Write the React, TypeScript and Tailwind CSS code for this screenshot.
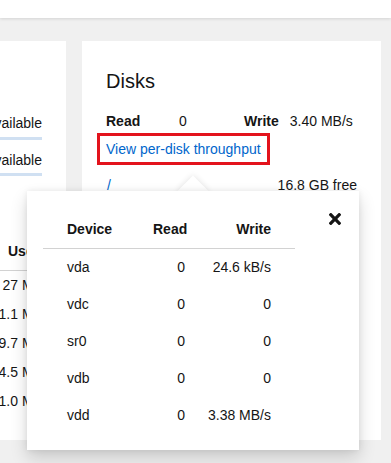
import React from "react";

export default function App() {
  const rows: [string, string, string][] = [
    ["vda", "0", "24.6 kB/s"],
    ["vdc", "0", "0"],
    ["sr0", "0", "0"],
    ["vdb", "0", "0"],
    ["vdd", "0", "3.38 MB/s"],
  ];
  const used = ["27", "1.1", "9.7", "4.5", "1.0"];
  return (
    <div className="relative h-[463px] w-[391px] overflow-hidden bg-[#f0f0f0] font-['Liberation_Sans',Arial,sans-serif] text-[14px] leading-[21px] text-[#151515]">
      <div className="relative z-10 h-[18px] bg-white shadow-[0_1px_3px_rgba(0,0,0,0.12)]" />
      <div className="flex gap-4 pt-[23px]">
        {/* left card (cut off) */}
        <div className="h-[399px] w-[66px] shrink-0 overflow-hidden bg-white pr-[24px]">
          <div className="mt-[72px] flex justify-end whitespace-nowrap">
            <span className="shrink-0">10.2 GB available</span>
          </div>
          <div className="mt-[3px] h-[3px] bg-[#d0e0f2]" />
          <div className="mt-[10px] flex justify-end whitespace-nowrap">
            <span className="shrink-0">5.5 GB available</span>
          </div>
          <div className="mt-[2px] h-[3px] bg-[#d0e0f2]" />
          <div className="mt-[65px] w-[60px] border-b border-[#d2d2d2] pb-[8px] pl-[8px] font-bold whitespace-nowrap">
            Used
          </div>
          {used.map((u) => (
            <div key={u} className="flex h-[29px] items-center whitespace-nowrap">
              <span className="ml-[-42px] w-[60px] shrink-0 text-right">{u}</span>
              <span className="ml-[4px] shrink-0">MiB</span>
            </div>
          ))}
        </div>
        {/* Disks card */}
        <div className="h-[399px] w-[299px] shrink-0 bg-white px-6 pt-[25px]">
          <h2 className="text-[20px] leading-[30px] font-normal">Disks</h2>
          <div className="mt-[15px] flex whitespace-nowrap">
            <span className="w-[73px] font-bold">Read</span>
            <span className="w-[65px]">0</span>
            <span className="font-bold">Write</span>
            <span className="ml-[11px]">3.40 MB/s</span>
          </div>
          <div className="mt-[1px] ml-[-9px] flex h-[32px] w-[173px] items-center border-[3px] border-[#e3131c] pl-[6px] whitespace-nowrap text-[#0066cc]">
            View per-disk throughput
          </div>
          <div className="mt-[10px] flex justify-between">
            <span className="pl-[1px] text-[#0066cc]">/</span>
            <span>16.8 GB free</span>
          </div>
        </div>
      </div>

      {/* popover */}
      <div className="absolute left-[27px] top-[191px] w-[332px]">
        <div className="absolute left-[155px] top-[-11px] h-[22px] w-[22px] rotate-45 bg-white shadow-[0_0_6px_0_rgba(3,3,3,0.12)]" />
        <div className="relative h-[259px] bg-white pt-[20px] pl-[16px] shadow-[0_8px_16px_0_rgba(3,3,3,0.16),0_0_6px_0_rgba(3,3,3,0.08)]">
          <button className="absolute left-[302px] top-[22px] flex h-[12px] w-[12px] items-center justify-center">
            <svg viewBox="0 80 352 352" width="12" height="12" fill="#151515">
              <path d="M242.72 256l100.07-100.07c12.28-12.28 12.28-32.19 0-44.48l-22.24-22.24c-12.28-12.28-32.19-12.28-44.48 0L176 189.28 75.93 89.21c-12.28-12.28-32.19-12.28-44.48 0L9.21 111.45c-12.28 12.28-12.28 32.19 0 44.48L109.28 256 9.21 356.07c-12.28 12.28-12.28 32.19 0 44.48l22.24 22.24c12.28 12.28 32.2 12.28 44.48 0L176 322.72l100.07 100.07c12.28 12.28 32.2 12.28 44.48 0l22.24-22.24c12.28-12.28 12.28-32.19 0-44.48L242.72 256z" />
            </svg>
          </button>
          <div className="w-[252px]">
            <div className="flex h-[38px] items-center border-b border-[#d2d2d2] pb-[1px] font-bold">
              <span className="w-[110px] pl-[24px]">Device</span>
              <span className="w-[32px] text-right">Read</span>
              <span className="flex-1 pr-[24px] text-right">Write</span>
            </div>
            {rows.map((r) => (
              <div key={r[0]} className="flex h-[37px] items-center">
                <span className="w-[110px] pl-[24px]">{r[0]}</span>
                <span className="w-[32px] text-right">{r[1]}</span>
                <span className="flex-1 pr-[24px] text-right whitespace-nowrap">{r[2]}</span>
              </div>
            ))}
          </div>
        </div>
      </div>
    </div>
  );
}
